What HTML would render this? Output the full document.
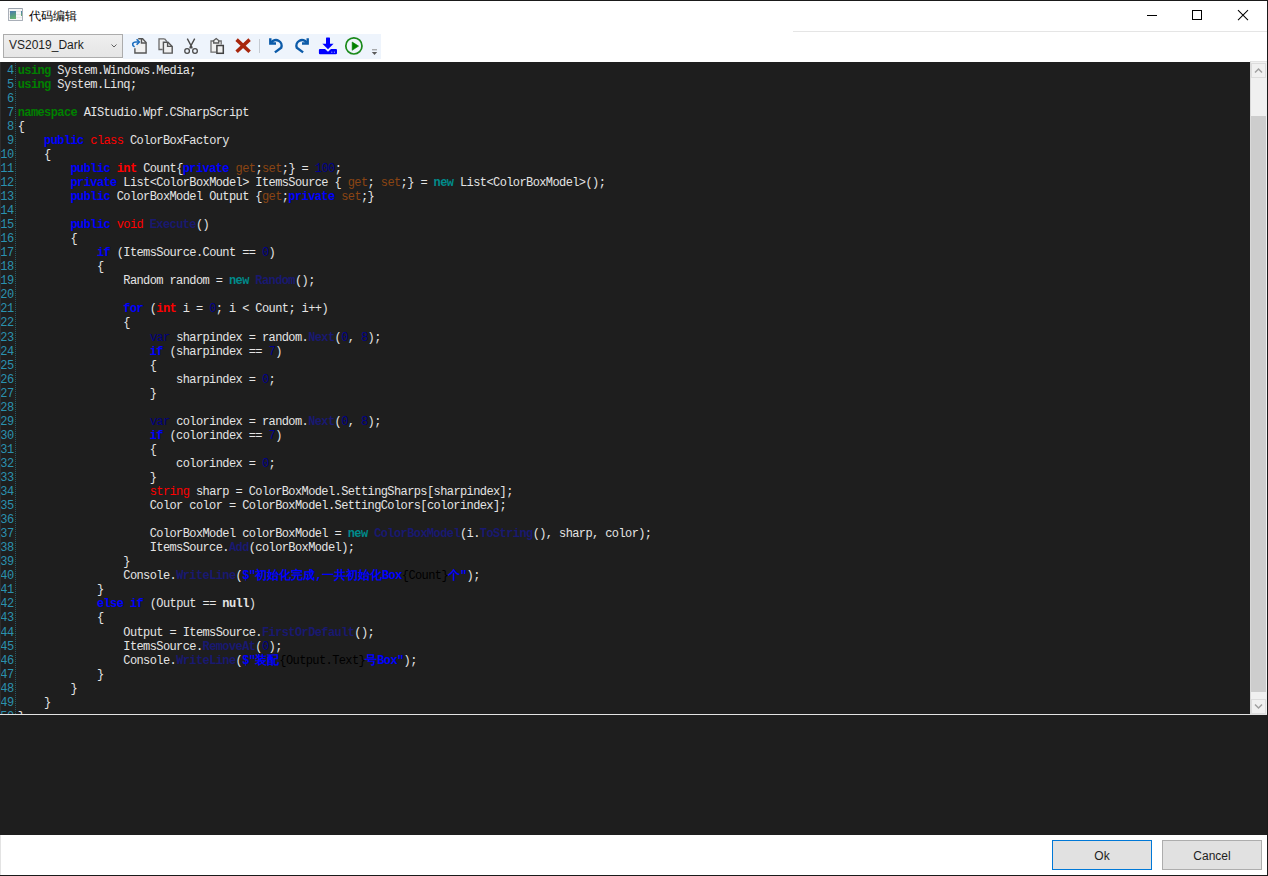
<!DOCTYPE html>
<html><head><meta charset="utf-8">
<style>
*{margin:0;padding:0;box-sizing:border-box}
html,body{width:1268px;height:876px;overflow:hidden;background:#fff;font-family:"Liberation Sans",sans-serif}
.a{position:absolute}
#topb{left:0;top:0;width:1268px;height:1px;background:#1a1a1a}
#rb{left:1267px;top:0;width:1px;height:876px;background:#1a1a1a}
#bb{left:0;top:875px;width:1268px;height:1px;background:#1a1a1a}
#ticon{left:8px;top:8px;width:15px;height:13px;border:1px solid #a9afb8;border-top-color:#9aa2ac;border-radius:1px;background:linear-gradient(#f6f6f6,#f6f6f6 2px,#e6e6e6 2px,#e6e6e6 3px,#f6f6f6 3px,#f6f6f6 5px,#e8e8e8 5px,#e8e8e8 6px,#f6f6f6 6px,#f6f6f6 8px,#e8e8e8 8px,#e8e8e8 9px,#f6f6f6 9px)}
#ticon i{position:absolute;left:1px;top:2px;width:6px;height:8px;background:linear-gradient(160deg,#4a78b2,#5aa07e 60%,#6ab86e)}
#ticon b{position:absolute;left:12px;top:2px;width:1px;height:5px;background:linear-gradient(#4a7fb0,#6ab070)}
#title{left:29px;top:7.5px;font-size:12px;line-height:16px;color:#000}
#sep1{left:793px;top:31px;width:474px;height:1px;background:#e5e5e5}
#combo{left:3px;top:34px;width:120px;height:24px;border:1px solid #acacac;background:linear-gradient(#efefef,#e5e5e5)}
#combo span{position:absolute;left:5px;top:3.4px;font-size:12px;line-height:14px;color:#1e1e1e}
#tb{left:123px;top:34px;width:258px;height:25px;background:#eef4fc}
#ed{left:0;top:62px;width:1250px;height:652px;background:#1e1e1e;overflow:hidden}
#edl{left:0;top:62px;width:1px;height:652px;background:#2c2c2c}
#sb{left:1250px;top:61px;width:17px;height:653px;background:#f0f0f0;border-left:1px solid #d9d9d9;border-top:1px solid #e3e3e3}
#ln714{left:0;top:714px;width:1267px;height:1px;background:#e3e3e3}
#out{left:0;top:715px;width:1267px;height:120px;background:#1e1e1e}
#nums{position:absolute;left:0;top:1.65px;width:13.5px;text-align:right;color:#2b91af}
#code{position:absolute;left:17.7px;top:1.65px;color:#e4e4e4;white-space:pre}
#nums,#code{font-family:"Liberation Mono",monospace;font-size:12px;letter-spacing:-0.6px}
.l{height:14.05px;line-height:14.05px;white-space:pre}
#dots{left:15px;top:62px;width:1px;height:652px;background:repeating-linear-gradient(transparent 0 1px,#2b91af 1px 2px);opacity:.5}
.g{color:#008000;font-weight:bold}
.v{color:#0000ff;font-weight:bold}
.r{color:#ff0000}
.rb{color:#ff0000;font-weight:bold}
.t{color:#008b8b;font-weight:bold}
.s{color:#8b4513}
.n{color:#00008b}
.c{color:#000080}
.m{color:#191970;font-weight:bold}
.str{color:#0000ff;font-weight:bold}
.z{letter-spacing:0}
.k{color:#000}
.nb{font-weight:bold}
.btn{top:840px;width:100px;height:30px;background:#e1e1e1;border:1px solid #adadad;font-size:12px;text-align:center;line-height:30px;color:#1e1e1e}
</style></head><body>
<div class="a" id="topb"></div>
<div class="a" id="tb"></div>
<div class="a" id="ticon"><i></i><b></b></div>
<div class="a" id="title">代码编辑</div>
<div class="a" id="sep1"></div>
<svg class="a" style="left:0;top:0" width="400" height="62" viewBox="0 0 400 62">
<g fill="#f0f0f0" stroke="#555" stroke-width="1.4" stroke-linejoin="miter">
<!-- new doc -->
<path d="M138.2 38.8 H142.6 L146.1 42.5 V53 H134.9 V48.2" />
<path d="M141.5 38.8 V43 H146.1" fill="none"/>
<!-- copy back -->
<path d="M164.5 38.8 H159 V49.5 H162.6" fill="#f0f0f0" stroke="#6a6a6a" stroke-width="1.3"/>
<path d="M164.5 38.8 L167 41.6" fill="none" stroke="#6a6a6a" stroke-width="1.3"/>
<!-- copy front -->
<path d="M163.4 42.2 H168 L172.2 46.5 V53.1 H163.4 Z" />
<path d="M167.6 42.2 V46.4 H172.2" fill="none"/>
</g>
<!-- arrow -->
<g fill="none" stroke="#1d6fc0" stroke-width="1.6">
<path d="M134.6 46.9 C131.6 45.2 132 42.1 136 42 H139.2" />
<path d="M136.6 39.3 L139.3 42 L136.6 44.7" />
</g>
<!-- scissors -->
<g fill="none" stroke="#4a4a4a" stroke-width="1.5">
<path d="M187.3 38.6 L192.1 47.6 M194.7 38.6 L189.9 47.6 M189.4 47.9 H192.6" stroke-width="1.35"/>
<circle cx="187.1" cy="51" r="2.35" stroke-width="1.3"/>
<circle cx="195" cy="51" r="2.35" stroke-width="1.3"/>
</g>
<!-- paste -->
<g stroke="#707070" stroke-width="1.5" fill="#f0f0f0">
<path d="M221.2 44.5 V41 H211 V52.2 H216.3" stroke-width="1.3"/>
<path d="M213.7 43 V40.6 L216.2 38.6 L218.7 40.6 V43 Z" stroke="#5a5a5a" stroke-width="1.3"/>
</g>
<rect x="216.9" y="45.5" width="6.4" height="7.8" fill="#f0f0f0" stroke="#424242" stroke-width="1.5"/>
<!-- red x -->
<path d="M236.6 39.6 L249.6 51.8 M249.6 39.6 L236.6 51.8" stroke="#a8260c" stroke-width="3.5"/>
<!-- separator -->
<rect x="259" y="39" width="1" height="14" fill="#c6ccd4"/>
<!-- undo -->
<g fill="none" stroke="#0b5aa8" stroke-width="2.4">
<path d="M270.3 38.2 V43.5 H276"/>
<path d="M271.3 42.6 A5.6 5.6 0 0 1 281.2 47.7 L274.9 52.4"/>
<path d="M307.7 38.2 V43.5 H302"/>
<path d="M306.7 42.6 A5.6 5.6 0 0 0 296.8 47.7 L303.1 52.4"/>
</g>
<!-- download -->
<g fill="#0000ff">
<rect x="326" y="37.6" width="4" height="7" rx="0.6"/>
<path d="M322.4 43.8 H333.6 L328 49.2 Z"/>
<path d="M320 48.9 H325 L328 51.7 L331 48.9 H336 Q337 48.9 337 50 V53 Q337 54.2 335.9 54.2 H320 Q318.9 54.2 318.9 53 V50 Q318.9 48.9 320 48.9 Z"/>
</g>
<circle cx="331.8" cy="52.2" r="0.6" fill="#9aa8ff"/><circle cx="334.4" cy="52.2" r="0.6" fill="#9aa8ff"/>
<!-- play -->
<circle cx="353.9" cy="45.9" r="8.1" fill="none" stroke="#1a8a1a" stroke-width="1.7"/>
<path d="M352.2 42 L358.6 46.1 L352.2 50.3 Z" fill="#008000" stroke="#008000" stroke-width="0.6" stroke-linejoin="round"/>
<!-- overflow -->
<rect x="372" y="49.3" width="5" height="1" fill="#8a8a8a"/>
<path d="M371.8 52 H377.2 L374.5 55 Z" fill="#5a5a5a"/>
<!-- title icon -->
</svg>
<svg class="a" style="left:1100px;top:0" width="168" height="32" viewBox="1100 0 168 32">
<rect x="1147" y="15" width="10" height="1" fill="#000"/>
<rect x="1192.5" y="10.5" width="9" height="9" fill="none" stroke="#000" stroke-width="1"/>
<path d="M1238 10.2 L1248 20.2 M1248 10.2 L1238 20.2" stroke="#000" stroke-width="1.05"/>
</svg>
<div class="a" id="combo"><span>VS2019_Dark</span><svg style="position:absolute;left:106px;top:8px" width="8" height="6" viewBox="0 0 8 6"><path d="M1.5 1.5 L4 4 L6.5 1.5" fill="none" stroke="#606060" stroke-width="1"/></svg></div>
<div class="a" id="ed">
<div id="nums"><div class="l">4</div><div class="l">5</div><div class="l">6</div><div class="l">7</div><div class="l">8</div><div class="l">9</div><div class="l">10</div><div class="l">11</div><div class="l">12</div><div class="l">13</div><div class="l">14</div><div class="l">15</div><div class="l">16</div><div class="l">17</div><div class="l">18</div><div class="l">19</div><div class="l">20</div><div class="l">21</div><div class="l">22</div><div class="l">23</div><div class="l">24</div><div class="l">25</div><div class="l">26</div><div class="l">27</div><div class="l">28</div><div class="l">29</div><div class="l">30</div><div class="l">31</div><div class="l">32</div><div class="l">33</div><div class="l">34</div><div class="l">35</div><div class="l">36</div><div class="l">37</div><div class="l">38</div><div class="l">39</div><div class="l">40</div><div class="l">41</div><div class="l">42</div><div class="l">43</div><div class="l">44</div><div class="l">45</div><div class="l">46</div><div class="l">47</div><div class="l">48</div><div class="l">49</div><div class="l">50</div></div>
<div id="code"><div class="l"><span class="g">using</span> System.Windows.Media;</div><div class="l"><span class="g">using</span> System.Linq;</div><div class="l"></div><div class="l"><span class="g">namespace</span> AIStudio.Wpf.CSharpScript</div><div class="l">{</div><div class="l">    <span class="v">public</span> <span class="r">class</span> ColorBoxFactory</div><div class="l">    {</div><div class="l">        <span class="v">public</span> <span class="rb">int</span> Count{<span class="v">private</span> <span class="s">get</span>;<span class="s">set</span>;} = <span class="n">100</span>;</div><div class="l">        <span class="v">private</span> List&lt;ColorBoxModel&gt; ItemsSource { <span class="s">get</span>; <span class="s">set</span>;} = <span class="t">new</span> List&lt;ColorBoxModel&gt;();</div><div class="l">        <span class="v">public</span> ColorBoxModel Output {<span class="s">get</span>;<span class="v">private</span> <span class="s">set</span>;}</div><div class="l"></div><div class="l">        <span class="v">public</span> <span class="r">void</span> <span class="m">Execute</span>()</div><div class="l">        {</div><div class="l">            <span class="v">if</span> (ItemsSource.Count == <span class="n">0</span>)</div><div class="l">            {</div><div class="l">                Random random = <span class="t">new</span> <span class="m">Random</span>();</div><div class="l"></div><div class="l">                <span class="v">for</span> (<span class="rb">int</span> i = <span class="n">0</span>; i &lt; Count; i++)</div><div class="l">                {</div><div class="l">                    <span class="c">var</span> sharpindex = random.<span class="m">Next</span>(<span class="n">0</span>, <span class="n">8</span>);</div><div class="l">                    <span class="v">if</span> (sharpindex == <span class="n">7</span>)</div><div class="l">                    {</div><div class="l">                        sharpindex = <span class="n">0</span>;</div><div class="l">                    }</div><div class="l"></div><div class="l">                    <span class="c">var</span> colorindex = random.<span class="m">Next</span>(<span class="n">0</span>, <span class="n">8</span>);</div><div class="l">                    <span class="v">if</span> (colorindex == <span class="n">7</span>)</div><div class="l">                    {</div><div class="l">                        colorindex = <span class="n">0</span>;</div><div class="l">                    }</div><div class="l">                    <span class="r">string</span> sharp = ColorBoxModel.SettingSharps[sharpindex];</div><div class="l">                    Color color = ColorBoxModel.SettingColors[colorindex];</div><div class="l"></div><div class="l">                    ColorBoxModel colorBoxModel = <span class="t">new</span> <span class="m">ColorBoxModel</span>(i.<span class="m">ToString</span>(), sharp, color);</div><div class="l">                    ItemsSource.<span class="m">Add</span>(colorBoxModel);</div><div class="l">                }</div><div class="l">                Console.<span class="m">WriteLine</span>(<span class="str">$&quot;</span><span class="str z">初始化完成</span><span class="str">,</span><span class="str z">一共初始化</span><span class="str">Box</span><span class="k">{Count}</span><span class="str z">个</span><span class="str">&quot;</span>);</div><div class="l">            }</div><div class="l">            <span class="v">else</span> <span class="v">if</span> (Output == <span class="nb">null</span>)</div><div class="l">            {</div><div class="l">                Output = ItemsSource.<span class="m">FirstOrDefault</span>();</div><div class="l">                ItemsSource.<span class="m">RemoveAt</span>(<span class="n">0</span>);</div><div class="l">                Console.<span class="m">WriteLine</span>(<span class="str">$&quot;</span><span class="str z">装配</span><span class="k">{Output.Text}</span><span class="str z">号</span><span class="str">Box&quot;</span>);</div><div class="l">            }</div><div class="l">        }</div><div class="l">    }</div><div class="l">}</div></div>
</div>
<div class="a" id="dots"></div>
<div class="a" id="edl"></div>
<div class="a" style="left:0;top:835px;width:1px;height:40px;background:#e3e3e3"></div>
<div class="a" id="sb"></div>
<div class="a" style="left:1251px;top:63px;width:15px;height:15px;border:1px solid #dcdcdc;background:#f0f0f0"></div>
<svg class="a" style="left:1251px;top:63px" width="15" height="15" viewBox="0 0 15 15"><path d="M4 9.5 L7.5 6 L11 9.5" fill="none" stroke="#a0a0a0" stroke-width="1.5"/></svg>
<div class="a" style="left:1251px;top:116px;width:15px;height:576px;background:#cdcdcd"></div>
<div class="a" style="left:1251px;top:699px;width:15px;height:15px;border:1px solid #dcdcdc;background:#f0f0f0"></div>
<svg class="a" style="left:1251px;top:699px" width="15" height="15" viewBox="0 0 15 15"><path d="M4 5.5 L7.5 9 L11 5.5" fill="none" stroke="#a0a0a0" stroke-width="1.5"/></svg>
<div class="a" id="ln714"></div>
<div class="a" id="out"></div>
<div class="a btn" style="left:1052px;border-color:#0078d7">Ok</div>
<div class="a btn" style="left:1162px">Cancel</div>
<div class="a" id="rb"></div>
<div class="a" id="bb"></div>
</body></html>
